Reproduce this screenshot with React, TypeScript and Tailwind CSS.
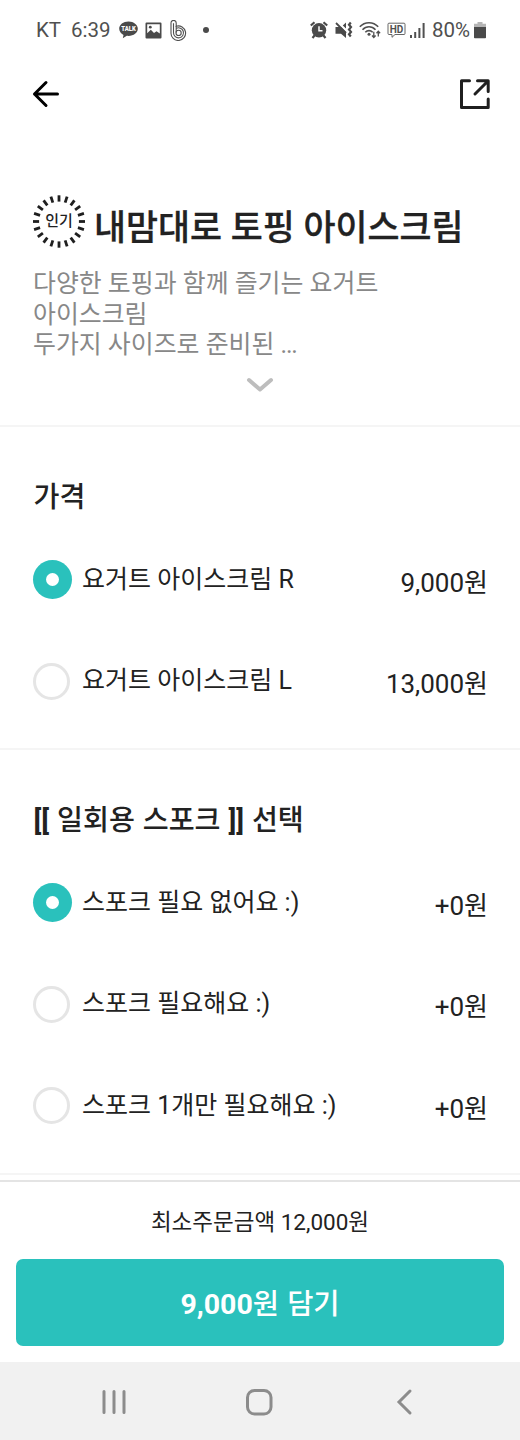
import React from "react";

type Option = { label: string; price: string; checked?: boolean };

const priceOptions: Option[] = [
    { label: "요거트 아이스크림 R", price: "9,000원", checked: true },
    { label: "요거트 아이스크림 L", price: "13,000원" },
];

const sporkOptions: Option[] = [
    { label: "스포크 필요 없어요 :)", price: "+0원", checked: true },
    { label: "스포크 필요해요 :)", price: "+0원" },
    { label: "스포크 1개만 필요해요 :)", price: "+0원" },
];

function StatusBar() {
    return (
        <div className="flex h-[60px] items-center pl-[36px] pr-[34px] text-[20.5px] leading-none text-[#505050]">
            <span className="w-[35px] pt-px">KT</span>
            <span className="w-[48px] pt-px">6:39</span>
            {/* talk bubble */}
            <svg width="19" height="18" viewBox="0 0 19 18" className="shrink-0">
                <path d="M9.5 0.5C4.3 0.5 0.2 3.7 0.2 7.8c0 2.6 1.7 4.8 4.3 6.1L3.8 17.3l4-2.5c.5.1 1.1.1 1.7.1 5.2 0 9.3-3.1 9.3-7.1S14.7.5 9.5.5z" fill="#4a4a4a" />
                <text x="9.5" y="10.4" fontSize="7.2" fontWeight="900" textAnchor="middle" textLength="14.5" lengthAdjust="spacingAndGlyphs" fill="#fff">TALK</text>
            </svg>
            <svg width="17" height="17" viewBox="0 0 17 17" className="ml-[7px] shrink-0">
                <path fillRule="evenodd" d="M1.500.5h14a1 1 0 0 1 1 1v14a1 1 0 0 1-1 1h-14a1 1 0 0 1-1-1v-14a1 1 0 0 1 1-1zM2.200 2.200v9l3.600-3.400 3.200 3.200 2.500-1.700 3.300 2.200V2.200z" fill="#4a4a4a" />
                <circle cx="5.300" cy="5.200" r="1.400" fill="#4a4a4a" />
            </svg>
            <svg width="18" height="21" viewBox="0 0 18 21" className="ml-[8px] shrink-0" fill="none" stroke="#505050" strokeWidth="1.100">
                <path d="M1 12.800V3a2.600 2.600 0 0 1 5.200 0v3.200a7.300 7.300 0 1 1-5.200 6.600z" />
                <path d="M3.500 12.800V3.200M3.500 12.800a5 5 0 1 0 2.700-4.400M6.200 6v6.500" />
                <circle cx="8.600" cy="12.900" r="2.600" />
            </svg>
            <span className="ml-[15px] h-[6px] w-[6px] rounded-full bg-[#4a4a4a]" />
            <div className="ml-auto flex items-center">
                {/* alarm */}
                <svg width="18" height="18" viewBox="0 0 18 18" fill="none" stroke="#4a4a4a">
                    <circle cx="9" cy="9.300" r="7.200" fill="#4a4a4a" stroke="none" />
                    <path d="M.8 4.500 4.500 1.200M17.200 4.500 13.500 1.200" strokeWidth="2.200" />
                    <path d="M4.500 14.500 2.500 17M13.500 14.500l2 2.500" strokeWidth="2.200" />
                    <path d="M9 5.300v4.500h3.500" stroke="#fff" strokeWidth="1.500" />
                </svg>
                {/* muted with vibration */}
                <svg width="18" height="18" viewBox="0 0 18 18" className="ml-[7px]" fill="none" stroke="#4a4a4a">
                    <path d="M.5 6h5.500l5 5v6l-5-4.200H.5zM7.800 4.500 11 1.500v6z" fill="#4a4a4a" stroke="none" />
                    <path d="M1 2l10 10" strokeWidth="1.800" />
                    <path d="M15.800 1.500l-1.800 2.200 2 2.400-2 2.400 2 2.400-2 2.400 1.800 2.200" strokeWidth="2.200" />
                </svg>
                {/* wifi with traffic arrows */}
                <svg width="22" height="18" viewBox="0 0 22 18" className="ml-[6px]" fill="none" stroke="#505050">
                    <path d="M.8 5.800C5.800.3 14.200.3 19.200 5.800M3.500 8.700c3.700-4 9.300-4 13 0M6.300 11.300c2.200-2.300 5.200-2.300 7.400 0" strokeWidth="1.600" />
                    <circle cx="10" cy="13.300" r="1.500" fill="#505050" stroke="none" />
                    <path d="M14.800 10.800v5.500M13 14.500l1.800 2 1.800-2M19.300 15.500v-5M17.500 12.200l1.800-2 1.800 2" strokeWidth="1.300" />
                </svg>
                {/* HD voice */}
                <svg width="19" height="17" viewBox="0 0 19 17" className="ml-[6px]" fill="none" stroke="#666">
                    <path d="M2 1.200h15a1 1 0 0 1 1 1v9.300a1 1 0 0 1-1 1H8l-3 2.800v-2.800H2a1 1 0 0 1-1-1V2.200a1 1 0 0 1 1-1z" strokeWidth="1" />
                    <text x="9.500" y="10.500" fontSize="10" fontWeight="700" textAnchor="middle" fill="#505050" stroke="none">HD</text>
                </svg>
                <svg width="15" height="17" viewBox="0 0 15 17" className="ml-[4px]" fill="#505050">
                    <path d="M0 13h2v3H0zM4.200 10h2v6h-2zM8.400 6h2v10h-2zM12.600 1h2v15h-2z" />
                </svg>
                <span className="ml-[7px] w-[42px] pt-px">80%</span>
                <svg width="12" height="18" viewBox="0 0 12 18">
                    <path d="M3.500 1h5v1.800H12V6H0V2.800h3.500z" fill="#b5b5b5" />
                    <path d="M0 6h12v10.500a.8.8 0 0 1-.8.8H.8a.8.8 0 0 1-.8-.8z" fill="#4a4a4a" />
                </svg>
            </div>
        </div>
    );
}

function AppBar() {
    return (
        <div className="flex h-[68px] items-center justify-between pl-[32px] pr-[29px]">
            <svg width="28" height="28" viewBox="0 0 28 28" fill="none" stroke="#000" strokeWidth="3" strokeLinecap="round" strokeLinejoin="round">
                <path d="M14 2.500 2.500 14 14 25.500M2.500 14H25.500" />
            </svg>
            <svg width="32" height="32" viewBox="0 0 32 32" fill="none" stroke="#1f1f1f" strokeWidth="3" strokeLinecap="round" strokeLinejoin="round">
                <path d="M10.500 2.800H2.500v26.700h26.700V21M18.500 2.800h10.700v10.700M28.500 3.500 16 16" />
            </svg>
        </div>
    );
}

function PopularBadge() {
    return (
        <svg width="52" height="54" viewBox="0 0 52 54" className="shrink-0">
            {Array.from({ length: 20 }, (_, i) => (
                <path key={i} d="M26 1.300v6.300" stroke="#1f1f1f" strokeWidth="2.800" transform={`rotate(${i * 18} 26 27.500)`} />
            ))}
            <text x="26" y="31.500" fontSize="15" fontWeight="500" textAnchor="middle" fill="#1f1f1f">인기</text>
        </svg>
    );
}

function Radio({ checked }: { checked?: boolean }) {
    if (checked) {
        return (
            <span className="flex h-[39px] w-[39px] items-center justify-center rounded-full bg-[#2ac1bc]">
                <span className="h-[13px] w-[13px] rounded-full bg-white" />
            </span>
        );
    }
    return <span className="block h-[37px] w-[37px] rounded-full border-3 border-[#e5e5e5]" />;
}

// Hangul stays medium, brackets take the heavier weight
function Heading({ text }: { text: string }) {
    return (
        <h2 className="h-[53px] pl-[0.5px] text-[28.2px] leading-[43px] font-medium [word-spacing:0.9px] whitespace-nowrap">
            {text.split(/([[\]]+)/).map((part, i) => (
                i % 2 ? <span key={i} className="font-bold">{part}</span> : part
            ))}
        </h2>
    );
}

function OptionGroup({ title, options }: { title: string; options: Option[] }) {
    return (
        <section className="border-t-2 border-[#f5f5f5] pl-[33px] pr-[32px] pt-[49px] pb-[16px]">
            <Heading text={title} />
            {options.map((option) => (
                <div key={option.label} className="flex h-[101.5px] items-center">
                    <div className="w-[49px]">
                        <Radio checked={option.checked} />
                    </div>
                    <span className="text-[25px] leading-[36px] whitespace-nowrap">{option.label}</span>
                    <span className="ml-auto pt-[6px] text-[26px] leading-[36px] whitespace-nowrap">{option.price}</span>
                </div>
            ))}
        </section>
    );
}

function OrderBar() {
    return (
        <div className="h-[182px] shrink-0 border-t-2 border-[#e4e4e4] bg-white px-4">
            <p className="h-[77px] text-center text-[22.5px] leading-[81px]">최소주문금액 12,000원</p>
            <button className="block h-[87px] w-full rounded-[7px] bg-[#2ac1bc] pt-[5px] text-[28.5px] font-medium text-white [word-spacing:1px]">
                <span className="font-bold">9,000</span>원 담기
            </button>
        </div>
    );
}

function NavBar() {
    return (
        <div className="flex h-[78px] shrink-0 items-center bg-[#f1f1f1] pl-[101px] pt-px">
            <svg width="26" height="26" viewBox="0 0 26 26" stroke="#8c8c8c" strokeWidth="3" strokeLinecap="round">
                <path d="M3 2.500v21M13 2.500v21M23 2.500v21" />
            </svg>
            <svg width="28" height="28" viewBox="0 0 28 28" className="ml-[118px]" fill="none" stroke="#8c8c8c" strokeWidth="3">
                <rect x="2.500" y="2.500" width="23.500" height="23.500" rx="7" />
            </svg>
            <svg width="18" height="28" viewBox="0 0 18 28" className="ml-[123px]" fill="none" stroke="#8c8c8c" strokeWidth="3" strokeLinecap="round">
                <path d="M14 3 3 14l11 11" />
            </svg>
        </div>
    );
}

export default function App() {
    return (
        <div className="flex h-[1440px] w-[520px] flex-col overflow-hidden bg-white font-['Roboto','Noto_Sans_CJK_KR',sans-serif] text-[#222]">
            <div className="h-[1180px] overflow-hidden">
                <StatusBar />
                <AppBar />
                <div className="h-[297px] px-[33px] pt-[66px]">
                    <div className="flex h-[56px]">
                        <PopularBadge />
                        <h1 className="ml-[9px] text-[34.8px] leading-[68px] font-medium whitespace-nowrap [-webkit-text-stroke:0.3px_#222]">내맘대로 토핑 아이스크림</h1>
                    </div>
                    <p className="mt-[19px] text-[24.9px] leading-[30.5px] whitespace-nowrap text-[#888]">
                        다양한 토핑과 함께 즐기는 요거트
                        <br />
                        아이스크림
                        <br />
                        두가지 사이즈로 준비된 <span className="tracking-[-1.2px]">...</span>
                    </p>
                    <svg width="28" height="16" viewBox="0 0 28 16" className="mx-auto mt-[16px]" fill="none" stroke="#bdbdbd" strokeWidth="4" strokeLinecap="round" strokeLinejoin="round">
                        <path d="M3 3l11 9.500L25 3" />
                    </svg>
                </div>
                <OptionGroup title="가격" options={priceOptions} />
                <OptionGroup title="[[ 일회용 스포크 ]] 선택" options={sporkOptions} />
                <div className="border-t-2 border-[#f5f5f5]" />
            </div>
            <OrderBar />
            <NavBar />
        </div>
    );
}
